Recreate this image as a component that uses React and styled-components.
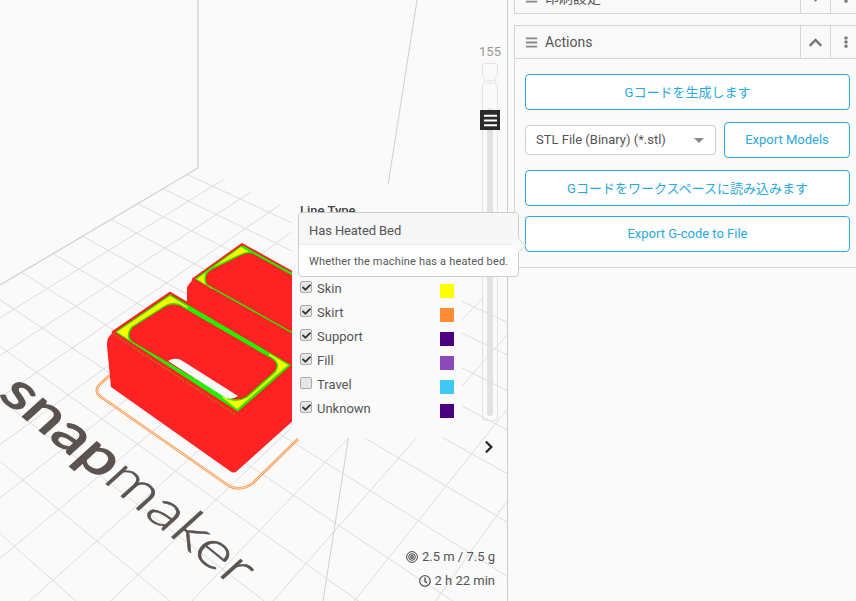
import styled, { createGlobalStyle } from 'styled-components';
import { FaBars, FaCheck, FaChevronDown, FaChevronRight, FaChevronUp, FaEllipsisV, FaRegClock } from 'react-icons/fa';

const GlobalStyle = createGlobalStyle`
    html, body {
        margin: 0;
        padding: 0;
        overflow: hidden;
        background: #fafafa;
    }
    * {
        box-sizing: border-box;
    }
`;

const FONT = `Roboto, "Noto Sans CJK JP", sans-serif`;

const Page = styled.div`
    display: flex;
    width: 856px;
    height: 601px;
    overflow: hidden;
    font-family: ${FONT};
    color: #555;
    background: #fafafa;
`;

const Viewport = styled.div`
    position: relative;
    flex: 0 0 508px;
    height: 100%;
    border-right: 1px solid #ccc;
    z-index: 2;
`;

const Canvas = styled.svg`
    position: absolute;
    top: 0;
    left: 0;
`;

const Legend = styled.div`
    position: absolute;
    top: 184px;
    left: 292px;
    width: 170px;
    height: 254px;
    padding: 19px 8px 0;
    background: #fafafa;
`;

const LegendTitle = styled.div`
    font-size: 13px;
    line-height: 15px;
    font-weight: 500;
    color: #444;
    margin-bottom: 10px;
`;

const LegendRow = styled.div`
    display: flex;
    align-items: center;
    height: 24px;
    font-size: 13px;
`;

const CheckBox = styled.span`
    display: flex;
    align-items: center;
    justify-content: center;
    width: 12px;
    height: 12px;
    margin: -2px 5px 0 0;
    background: #e6e6e6;
    border: 1px solid #aaa;
    border-radius: 2px;
    color: #333;
    font-size: 9px;
`;

const Swatch = styled.span`
    width: 14px;
    height: 14px;
    margin: 6px 0 0 auto;
    background: ${props => props.$color};
`;

const Tooltip = styled.div`
    position: absolute;
    top: 212px;
    left: 298px;
    width: 221px;
    height: 65px;
    background: #fff;
    border: 1px solid #ccc;
    border-radius: 4px;

    &::after {
        content: '';
        position: absolute;
        top: 27px;
        right: -6px;
        width: 10px;
        height: 10px;
        background: #fafafa;
        border-top: 1px solid #ddd;
        border-right: 1px solid #ddd;
        transform: rotate(45deg);
    }
`;

const TooltipTitle = styled.div`
    height: 32px;
    padding: 0 10px;
    font-size: 13px;
    line-height: 36px;
    letter-spacing: -0.1px;
    background: #f7f7f7;
    border-bottom: 1px solid #ebebeb;
    border-radius: 4px 4px 0 0;
`;

const TooltipBody = styled.div`
    padding: 0 10px;
    font-size: 11px;
    line-height: 33px;
    letter-spacing: 0.17px;
    white-space: nowrap;
`;

const Slider = styled.div`
    position: absolute;
    top: 45px;
    left: 470px;
    width: 40px;
    display: flex;
    flex-direction: column;
    align-items: center;
`;

const SliderValue = styled.div`
    font-size: 13px;
    line-height: 14px;
    color: #999;
    margin-bottom: 4px;
`;

const SliderTrack = styled.div`
    display: flex;
    justify-content: center;
    width: 16px;
    height: 328px;
    padding: 15px 0 4px;
    border: 1px solid #e2e2e2;
    border-top: none;
    border-radius: 0 0 4px 4px;
`;

const SliderFill = styled.div`
    width: 6px;
    height: 100%;
    background: #e2e2e2;
    border-radius: 3px;
`;

const SliderHandle = styled.div`
    position: absolute;
    top: 65px;
    left: 10px;
    display: flex;
    align-items: center;
    justify-content: center;
    width: 20px;
    height: 20px;
    background: #2a2a2a;
    color: #fff;
    font-size: 15px;
`;

const NextLayer = styled.div`
    position: absolute;
    top: 440px;
    left: 482px;
    color: #222;
    font-size: 14px;
    line-height: 14px;
`;

const Stats = styled.div`
    position: absolute;
    right: 12px;
    bottom: 12px;
    display: flex;
    flex-direction: column;
    align-items: flex-end;
    gap: 8px;
    font-size: 13px;
    line-height: 16px;
`;

const Stat = styled.div`
    display: flex;
    align-items: center;
    gap: 4px;
    svg {
        color: #444;
    }
`;

const Sidebar = styled.div`
    flex: 1;
    padding-left: 6px;
    margin-top: -20px;
    overflow: hidden;
    display: flex;
    flex-direction: column;
    gap: 11px;
`;

const Card = styled.section`
    width: 347px;
    background: #fafafa;
    border: 1px solid #d4d4d4;
`;

const CardHeader = styled.header`
    display: flex;
    align-items: stretch;
    height: 32px;
    background: #f9f9f9;
`;

const CardTitle = styled.div`
    flex: 1;
    display: flex;
    align-items: center;
    gap: 7px;
    padding-left: 10px;
    font-size: 14px;
    color: #555;
    svg {
        color: #888;
        font-size: 13px;
    }
`;

const HeaderButton = styled.div`
    display: flex;
    align-items: center;
    justify-content: center;
    width: 30px;
    border-left: 1px solid #d4d4d4;
    color: #777;
    font-size: ${props => props.$size || 15}px;
`;

const CardBody = styled.div`
    display: flex;
    flex-direction: column;
    padding: 15px 10px;
    border-top: 1px solid #d4d4d4;
`;

const ActionButton = styled.button`
    flex: ${props => (props.$fixed ? '0 0 126px' : 'none')};
    height: 36px;
    margin-top: ${props => props.$top || 0}px;
    padding: 0 0 2px;
    background: #fff;
    border: 1px solid #29a9e0;
    border-radius: 4px;
    color: #29a9e0;
    font-family: ${FONT};
    font-size: 13px;
`;

const ExportRow = styled.div`
    display: flex;
    align-items: center;
    gap: 8px;
    margin-top: 12px;
`;

const SelectWrap = styled.div`
    position: relative;
    flex: 1;

    &::after {
        content: '';
        position: absolute;
        top: 13px;
        right: 12px;
        border-left: 5px solid transparent;
        border-right: 5px solid transparent;
        border-top: 5px solid #888;
    }
`;

const Select = styled.select`
    display: block;
    width: 100%;
    height: 30px;
    padding: 0 10px 2px;
    appearance: none;
    background: #fff;
    border: 1px solid #ccc;
    border-radius: 4px;
    color: #555;
    font-family: ${FONT};
    font-size: 13px;
`;

// vanishing points of the printer floor, measured on the screen
const VP_A = [-1036, -390];
const VP_B = [1144, -390];
const CORNER = [198, 168];

const rayTo = (from, vp, x) => from[1] + ((from[1] - vp[1]) / (from[0] - vp[0])) * (x - from[0]);

const gridLines = () => {
    const lines = [];
    for (let k = 0; k < 14; k++) {
        const x = VP_B[0] - 1 / (0.001045 - 0.0000257 * k);
        const start = [x, rayTo(CORNER, VP_B, x)];
        lines.push([start[0], start[1], 520, rayTo(start, VP_A, 520)]);
    }
    for (let m = 0; m < 20; m++) {
        const x = 1 / (0.000794 - 0.000017 * m) + VP_A[0];
        const start = [x, rayTo(CORNER, VP_A, x)];
        lines.push([start[0], start[1], -20, rayTo(start, VP_B, -20)]);
    }
    return lines;
};

const RED = '#fe2222';
const GREEN = '#22f000';
const YELLOW = '#fcfc00';
const RAFT = 'M110 375L99 385Q94 392 101 397L229 486Q241 492 253 483L298 439';

const Floor = () => (
    <g fill="none">
        {gridLines().map(([x1, y1, x2, y2], i) => (
            <line key={i} x1={x1} y1={y1} x2={x2} y2={y2} stroke="#dcdcdc" strokeWidth="1" />
        ))}
        <path d="M198 0V168L-10 291" stroke="#d2d2d2" strokeWidth="1.3" />
        <path d="M417 0L323 601" stroke="#cfcfcf" strokeWidth="1" />
    </g>
);

const Logo = () => (
    <text
        transform="matrix(1.02 0.826 -0.8 0.725 -3 396)"
        fontFamily="Lato, sans-serif"
        fontSize="50"
        fill="#5a5350"
        stroke="#5a5350"
    >
        <tspan fontWeight="400" strokeWidth="1.200">snap</tspan>
        <tspan fontWeight="300" strokeWidth="0.500">maker</tspan>
    </text>
);

const Model = () => (
    <g>
        {/* raft outline */}
        <path d={RAFT} fill="none" stroke="#f9984a" strokeWidth="2.6" />
        <path d={RAFT} fill="none" stroke="#fff" strokeWidth="0.7" />
        {/* back block */}
        <path d="M193 279L187 287V312L296 376V335Z" fill={RED} />
        <path d="M242 244L193 279L296 336V274Z" fill={GREEN} stroke={RED} strokeWidth="2" strokeLinejoin="round" />
        <path d="M197 279L241 247L257 257L212 289Z" fill={YELLOW} />
        <path
            d="M205 278Q205 272 213 268L240 255Q247 251 253 253L300 279V337L207 285Q205 283 205 278Z"
            fill={RED}
            stroke={GREEN}
            strokeWidth="1.400"
        />
        {/* front block */}
        <path d="M113 332L108 338Q107 341 107 346L111 387L230 471Q234 474 237 471L296 418V363L238 413Z" fill={RED} />
        <path d="M170 293L113 332L238 413L293 365Z" fill={GREEN} stroke={RED} strokeWidth="2.500" strokeLinejoin="round" />
        <path d="M117 332L170 296L188 307L139 346Z" fill={YELLOW} />
        <path d="M237 409L288 365L270 354L222 397Z" fill={YELLOW} />
        <path
            d="M165 306Q172 302 180 305L272 358Q281 364 275 372L247 397Q237 403 227 398L132 342Q125 336 132 327Z"
            fill={RED}
            stroke={GREEN}
            strokeWidth="1.400"
        />
        <path d="M168 361Q174 357 181 360L238 396Q232 400 226 398Z" fill="#fafafa" />
        <path d="M113 334L236 415" fill="none" stroke="#9c9a14" strokeWidth="1.500" strokeDasharray="1 2" />
    </g>
);

const LEGEND = [
    { label: 'Outer Wall', color: '#ff2222', checked: true },
    { label: 'Inner Wall', color: '#22f000', checked: true },
    { label: 'Skin', color: '#ffff00', checked: true },
    { label: 'Skirt', color: '#ff8c35', checked: true },
    { label: 'Support', color: '#4b0082', checked: true },
    { label: 'Fill', color: '#8b4ab8', checked: true },
    { label: 'Travel', color: '#40c8f4', checked: false },
    { label: 'Unknown', color: '#4b0082', checked: true },
];

const App = () => {
    return (
        <Page>
            <GlobalStyle />
            <Viewport>
                <Canvas width="507" height="601" viewBox="0 0 507 601">
                    <Floor />
                    <Logo />
                    <Model />
                </Canvas>
                <Legend>
                    <LegendTitle>Line Type</LegendTitle>
                    {LEGEND.map(item => (
                        <LegendRow key={item.label}>
                            <CheckBox>{item.checked && <FaCheck />}</CheckBox>
                            {item.label}
                            <Swatch $color={item.color} />
                        </LegendRow>
                    ))}
                </Legend>
                <Slider>
                    <SliderValue>155</SliderValue>
                    <svg width="16" height="30" viewBox="0 0 16 30" fill="none" stroke="#e2e2e2">
                        <path d="M0.500 30V24Q0.500 22 3 20V19Q3 16 3 15Q0.500 13 0.500 11V3Q0.500 0.500 3 0.500H13Q15.500 0.500 15.500 3V11Q15.500 13 13 15V20Q15.500 22 15.500 24V30" />
                        <path d="M5 17.500H11M5 20H11" />
                    </svg>
                    <SliderTrack>
                        <SliderFill />
                    </SliderTrack>
                    <SliderHandle>
                        <FaBars />
                    </SliderHandle>
                </Slider>
                <NextLayer>
                    <FaChevronRight />
                </NextLayer>
                <Stats>
                    <Stat>
                        <svg width="12" height="12" viewBox="0 0 12 12" fill="none" stroke="currentColor">
                            <circle cx="6" cy="6" r="5.400" strokeWidth="1" />
                            <circle cx="6" cy="6" r="3.300" strokeWidth="1" />
                            <circle cx="6" cy="6" r="1.300" strokeWidth="1.200" />
                        </svg>
                        2.5 m / 7.5 g
                    </Stat>
                    <Stat>
                        <FaRegClock size={12} />
                        2 h 22 min
                    </Stat>
                </Stats>
                <Tooltip>
                    <TooltipTitle>Has Heated Bed</TooltipTitle>
                    <TooltipBody>Whether the machine has a heated bed.</TooltipBody>
                </Tooltip>
            </Viewport>
            <Sidebar>
                <Card>
                    <CardHeader>
                        <CardTitle>
                            <FaBars />
                            印刷設定
                        </CardTitle>
                        <HeaderButton>
                            <FaChevronDown />
                        </HeaderButton>
                        <HeaderButton $size={12}>
                            <FaEllipsisV />
                        </HeaderButton>
                    </CardHeader>
                </Card>
                <Card>
                    <CardHeader>
                        <CardTitle>
                            <FaBars />
                            Actions
                        </CardTitle>
                        <HeaderButton>
                            <FaChevronUp />
                        </HeaderButton>
                        <HeaderButton $size={12}>
                            <FaEllipsisV />
                        </HeaderButton>
                    </CardHeader>
                    <CardBody>
                        <ActionButton>Gコードを生成します</ActionButton>
                        <ExportRow>
                            <SelectWrap>
                                <Select defaultValue="binary">
                                    <option value="binary">STL File (Binary) (*.stl)</option>
                                </Select>
                            </SelectWrap>
                            <ActionButton $fixed>Export Models</ActionButton>
                        </ExportRow>
                        <ActionButton $top={12}>Gコードをワークスペースに読み込みます</ActionButton>
                        <ActionButton $top={10}>Export G-code to File</ActionButton>
                    </CardBody>
                </Card>
            </Sidebar>
        </Page>
    );
};

export default App;
